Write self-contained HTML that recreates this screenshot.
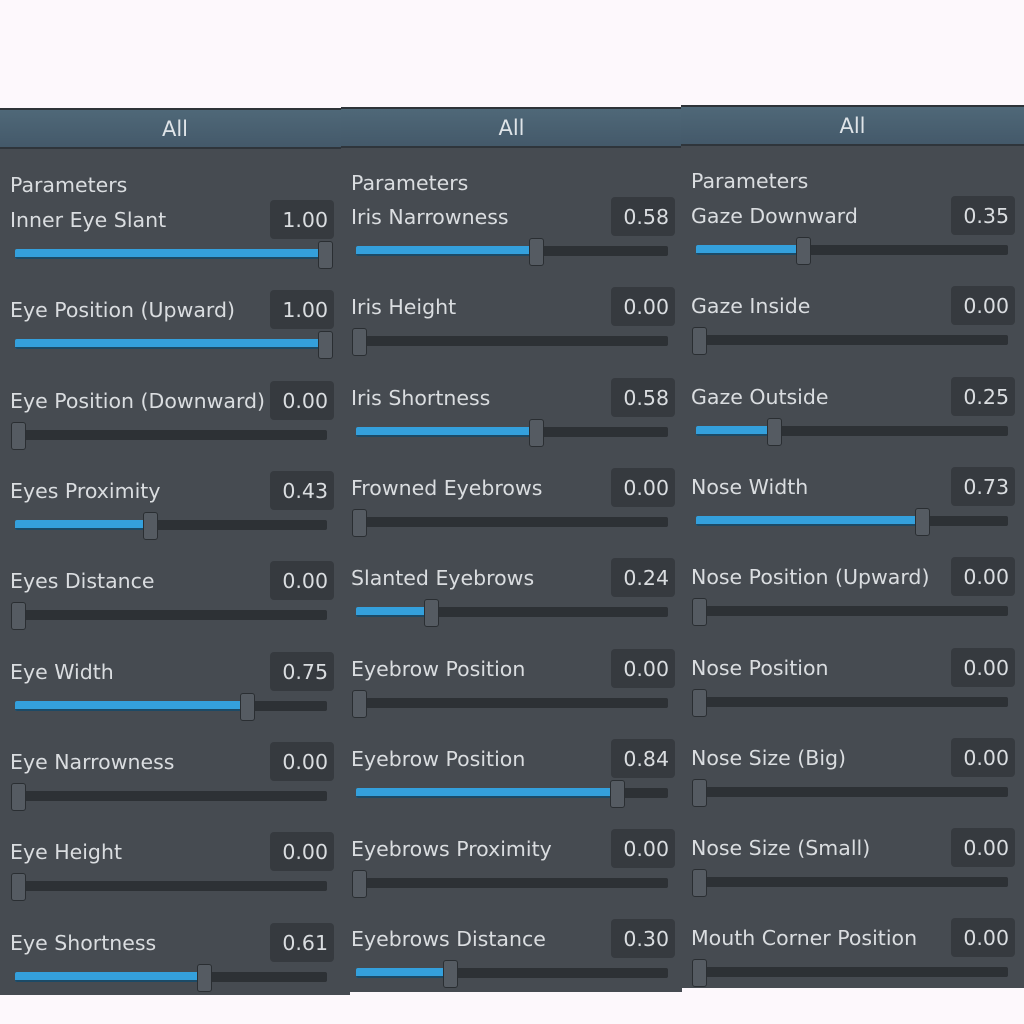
<!DOCTYPE html><html><head><style>
body{margin:0;width:1024px;height:1024px;background:#fdf8fc;position:relative;overflow:hidden;font-family:"DejaVu Sans","Liberation Sans",sans-serif}
.p{position:absolute;width:341px;background:#464b51;border-top:2px solid #2e3338}
.h{height:37px;background:linear-gradient(#4f6878,#44596a);border-bottom:2px solid #2f353b;color:#dfe4e8;font-size:21px;text-align:center;line-height:38px}
.pp{position:absolute;left:10px;color:#dadde0;font-size:20.5px;line-height:20px}
.r{position:absolute;left:0;width:341px;height:70px}
.l{position:absolute;left:10px;top:0;line-height:40px;font-size:20.5px;color:#dadde0;white-space:nowrap}
.v{position:absolute;left:270px;top:0;width:64px;height:39px;background:#363a3f;border-radius:4px;box-sizing:border-box;text-align:right;padding-right:6px;line-height:40px;font-size:20.5px;color:#dadde0}
.t{position:absolute;left:15px;top:49px;width:312px;height:10px;background:#2d3135;border-radius:2px;overflow:hidden}
.f{height:100%;background:#34a0dc;border-bottom:2px solid #1c4a66;box-sizing:border-box}
.k{position:absolute;top:41px;width:15px;height:28px;background:#555b62;border:1px solid #2a2e32;border-radius:3px;box-sizing:border-box}
</style></head><body>

<div class="p" style="left:0;top:108px;height:885px;width:350px"><div class="h">All</div>
<div class="pp" style="top:65px">Parameters</div>
<div class="r" style="top:90px"><div class="l">Inner Eye Slant</div><div class="v">1.00</div><div class="t"><div class="f" style="width:312px"></div></div><div class="k" style="left:318px"></div></div>
<div class="r" style="top:180px"><div class="l">Eye Position (Upward)</div><div class="v">1.00</div><div class="t"><div class="f" style="width:312px"></div></div><div class="k" style="left:318px"></div></div>
<div class="r" style="top:271px"><div class="l">Eye Position (Downward)</div><div class="v">0.00</div><div class="t"></div><div class="k" style="left:11px"></div></div>
<div class="r" style="top:361px"><div class="l">Eyes Proximity</div><div class="v">0.43</div><div class="t"><div class="f" style="width:135px"></div></div><div class="k" style="left:143px"></div></div>
<div class="r" style="top:451px"><div class="l">Eyes Distance</div><div class="v">0.00</div><div class="t"></div><div class="k" style="left:11px"></div></div>
<div class="r" style="top:542px"><div class="l">Eye Width</div><div class="v">0.75</div><div class="t"><div class="f" style="width:232px"></div></div><div class="k" style="left:240px"></div></div>
<div class="r" style="top:632px"><div class="l">Eye Narrowness</div><div class="v">0.00</div><div class="t"></div><div class="k" style="left:11px"></div></div>
<div class="r" style="top:722px"><div class="l">Eye Height</div><div class="v">0.00</div><div class="t"></div><div class="k" style="left:11px"></div></div>
<div class="r" style="top:813px"><div class="l">Eye Shortness</div><div class="v">0.61</div><div class="t"><div class="f" style="width:182px"></div></div><div class="k" style="left:197px"></div></div>
</div>

<div class="p" style="left:341px;top:107px;height:883px"><div class="h">All</div>
<div class="pp" style="top:64px">Parameters</div>
<div class="r" style="top:88px"><div class="l">Iris Narrowness</div><div class="v">0.58</div><div class="t"><div class="f" style="width:180px"></div></div><div class="k" style="left:188px"></div></div>
<div class="r" style="top:178px"><div class="l">Iris Height</div><div class="v">0.00</div><div class="t"></div><div class="k" style="left:11px"></div></div>
<div class="r" style="top:269px"><div class="l">Iris Shortness</div><div class="v">0.58</div><div class="t"><div class="f" style="width:180px"></div></div><div class="k" style="left:188px"></div></div>
<div class="r" style="top:359px"><div class="l">Frowned Eyebrows</div><div class="v">0.00</div><div class="t"></div><div class="k" style="left:11px"></div></div>
<div class="r" style="top:449px"><div class="l">Slanted Eyebrows</div><div class="v">0.24</div><div class="t"><div class="f" style="width:76px"></div></div><div class="k" style="left:83px"></div></div>
<div class="r" style="top:540px"><div class="l">Eyebrow Position</div><div class="v">0.00</div><div class="t"></div><div class="k" style="left:11px"></div></div>
<div class="r" style="top:630px"><div class="l">Eyebrow Position</div><div class="v">0.84</div><div class="t"><div class="f" style="width:262px"></div></div><div class="k" style="left:269px"></div></div>
<div class="r" style="top:720px"><div class="l">Eyebrows Proximity</div><div class="v">0.00</div><div class="t"></div><div class="k" style="left:11px"></div></div>
<div class="r" style="top:810px"><div class="l">Eyebrows Distance</div><div class="v">0.30</div><div class="t"><div class="f" style="width:95px"></div></div><div class="k" style="left:102px"></div></div>
</div>

<div class="p" style="left:681px;top:105px;height:881px;width:343px"><div class="h">All</div>
<div class="pp" style="top:64px">Parameters</div>
<div class="r" style="top:89px"><div class="l">Gaze Downward</div><div class="v">0.35</div><div class="t"><div class="f" style="width:110px"></div></div><div class="k" style="left:115px"></div></div>
<div class="r" style="top:179px"><div class="l">Gaze Inside</div><div class="v">0.00</div><div class="t"></div><div class="k" style="left:11px"></div></div>
<div class="r" style="top:270px"><div class="l">Gaze Outside</div><div class="v">0.25</div><div class="t"><div class="f" style="width:80px"></div></div><div class="k" style="left:86px"></div></div>
<div class="r" style="top:360px"><div class="l">Nose Width</div><div class="v">0.73</div><div class="t"><div class="f" style="width:228px"></div></div><div class="k" style="left:234px"></div></div>
<div class="r" style="top:450px"><div class="l">Nose Position (Upward)</div><div class="v">0.00</div><div class="t"></div><div class="k" style="left:11px"></div></div>
<div class="r" style="top:541px"><div class="l">Nose Position</div><div class="v">0.00</div><div class="t"></div><div class="k" style="left:11px"></div></div>
<div class="r" style="top:631px"><div class="l">Nose Size (Big)</div><div class="v">0.00</div><div class="t"></div><div class="k" style="left:11px"></div></div>
<div class="r" style="top:721px"><div class="l">Nose Size (Small)</div><div class="v">0.00</div><div class="t"></div><div class="k" style="left:11px"></div></div>
<div class="r" style="top:811px"><div class="l">Mouth Corner Position</div><div class="v">0.00</div><div class="t"></div><div class="k" style="left:11px"></div></div>
</div>
</body></html>
